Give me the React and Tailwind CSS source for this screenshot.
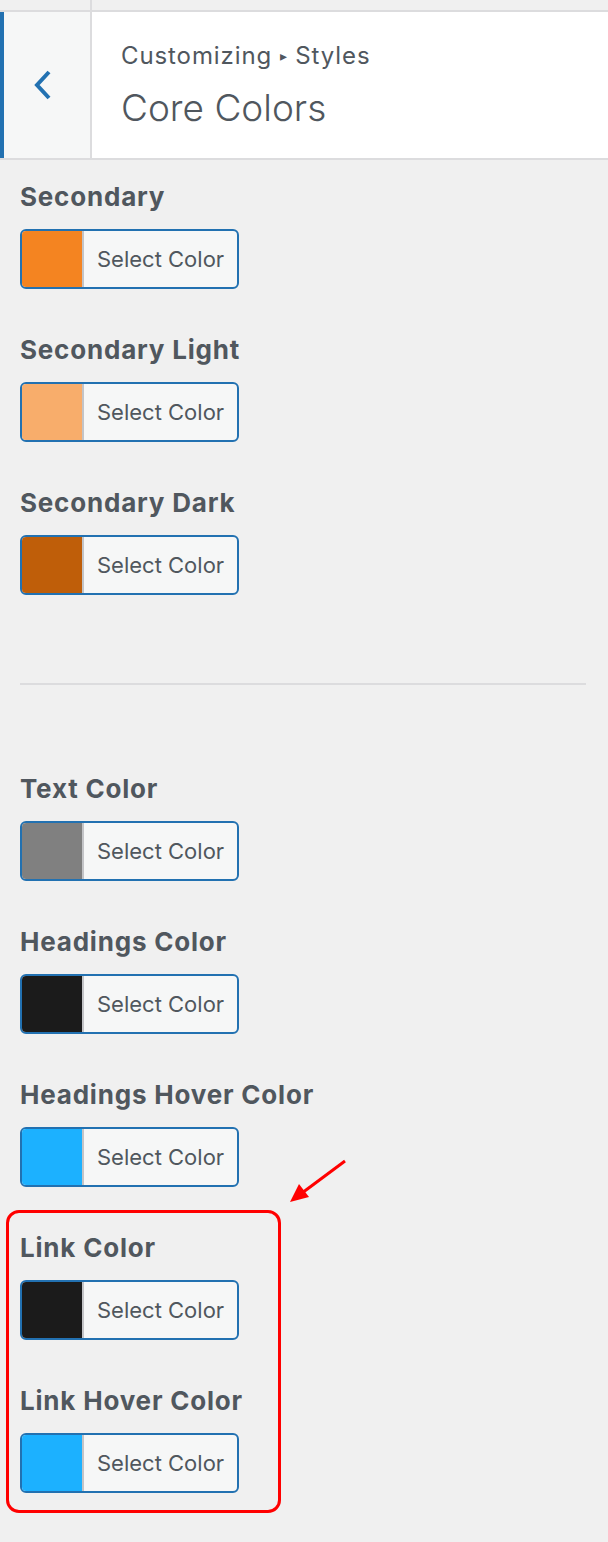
import React from 'react';

const font = { fontFamily: 'Inter, "Liberation Sans", sans-serif' };

const groupA = [
  { label: 'Secondary', color: 'bg-[#f48421]' },
  { label: 'Secondary Light', color: 'bg-[#f8ad6b]' },
  { label: 'Secondary Dark', color: 'bg-[#bf5e09]' },
];

const groupB = [
  { label: 'Text Color', color: 'bg-[#808080]' },
  { label: 'Headings Color', color: 'bg-[#1b1b1b]' },
  { label: 'Headings Hover Color', color: 'bg-[#1cb1ff]' },
  { label: 'Link Color', color: 'bg-[#1b1b1b]' },
  { label: 'Link Hover Color', color: 'bg-[#1cb1ff]' },
];

const ColorControl = ({ label, color }) => (
  <div className="mb-[46px]">
    <h3 className="h-[30px] text-[26px] leading-[30px] font-bold tracking-[0.8px] text-[#50575e] mb-[17px] whitespace-nowrap">
      {label}
    </h3>
    <button className="flex h-[60px] w-[219px] overflow-hidden rounded-[6px] border-2 border-[#2271b1] bg-[#f6f7f7]">
      <span className={`h-full w-[60px] shrink-0 ${color}`}></span>
      <span className="h-full w-[2px] shrink-0 bg-[#c3c4c7]"></span>
      <span className="flex-1 pl-[13px] text-left text-[22px] leading-[56px] text-[#50575e]">Select Color</span>
    </button>
  </div>
);

const App = () => {
  return (
    <div className="relative w-[608px] h-[1542px] overflow-hidden bg-[#f0f0f0]" style={font}>
      {/* top strip */}
      <div className="flex h-[12px] border-b-2 border-[#dcdcde]">
        <div className="w-[92px] border-r-2 border-[#dcdcde]"></div>
      </div>

      {/* section header */}
      <div className="flex h-[148px] border-b-2 border-[#dcdcde] bg-white">
        <button className="flex w-[92px] shrink-0 items-center justify-center border-l-4 border-r-2 border-l-[#2271b1] border-r-[#dcdcde] bg-[#f6f7f7] pr-[8px]">
          <svg width="22" height="34" viewBox="0 0 22 34" fill="none">
            <polyline points="17,4 5,17 17,30" stroke="#2271b1" strokeWidth="4" strokeLinejoin="miter" />
          </svg>
        </button>
        <div className="flex flex-col pl-[29px] pt-[28px]">
          <span className="text-[24px] leading-[32px] tracking-[0.9px] text-[#50575e]">
            Customizing <span className="text-[14px] align-[3px]">▸</span> Styles
          </span>
          <span className="mt-[13px] text-[37px] leading-[46px] font-light text-[#50575e]">Core Colors</span>
        </div>
      </div>

      {/* controls */}
      <div className="pl-[20px] pr-[22px] pt-[22px]">
        {groupA.map((c) => (
          <ColorControl key={c.label} {...c} />
        ))}
        <div className="mt-[88px] mb-[89px] h-[2px] bg-[#dcdcde]"></div>
        {groupB.map((c) => (
          <ColorControl key={c.label} {...c} />
        ))}
      </div>

      {/* annotation */}
      <div className="pointer-events-none absolute left-[6px] top-[1210px] h-[303px] w-[275px] rounded-[13px] border-[3px] border-[#ff0000]"></div>
      <svg className="pointer-events-none absolute left-0 top-0" width="608" height="1542">
        <line x1="345" y1="1161" x2="302" y2="1193" stroke="#ff0000" strokeWidth="3" />
        <polygon points="290,1202 309,1197 299,1184" fill="#ff0000" />
      </svg>
    </div>
  );
};

export default App;
